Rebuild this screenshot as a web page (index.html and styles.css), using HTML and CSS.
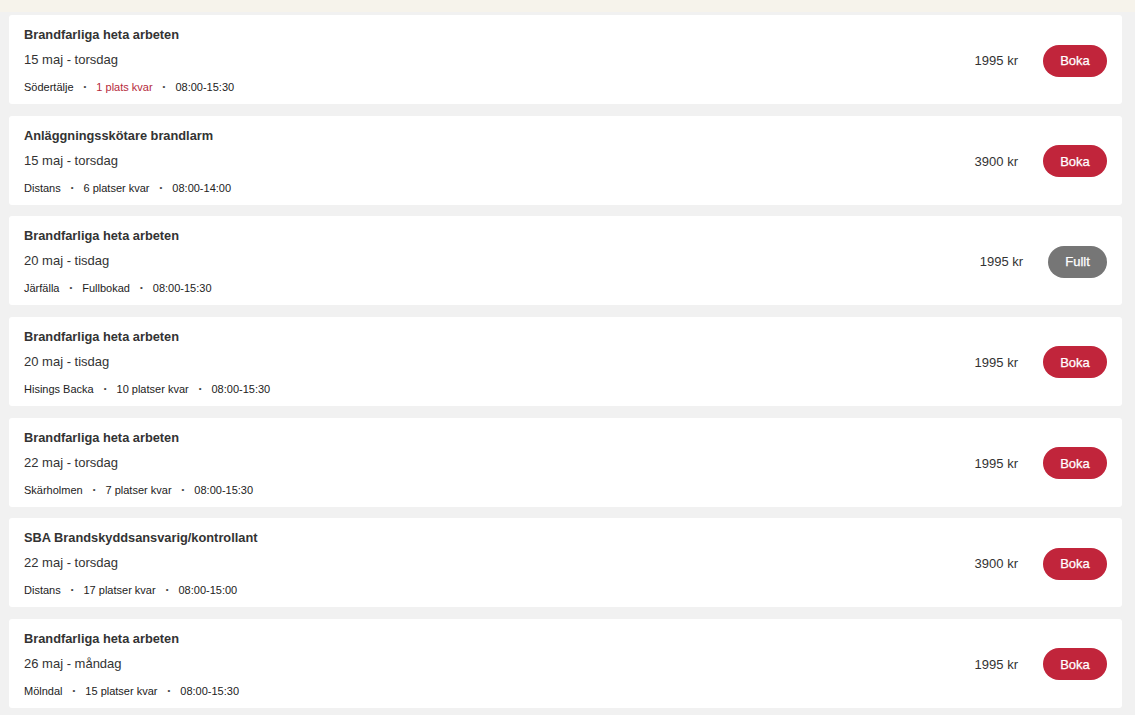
FILE: index.html
```html
<!DOCTYPE html>
<html lang="sv">
<head>
<meta charset="utf-8">
<title>Kurstillfällen</title>
<link rel="stylesheet" href="styles.css">
</head>
<body>
<div class="topstrip"></div>
<main class="list">
  <div class="card">
    <div class="info">
      <div class="title">Brandfarliga heta arbeten</div>
      <div class="date">15 maj - torsdag</div>
      <div class="meta"><span>Södertälje</span><span class="dot">•</span><span class="low">1 plats kvar</span><span class="dot">•</span><span>08:00-15:30</span></div>
    </div>
    <div class="price">1995 kr</div>
    <button class="btn">Boka</button>
  </div>
  <div class="card">
    <div class="info">
      <div class="title">Anläggningsskötare brandlarm</div>
      <div class="date">15 maj - torsdag</div>
      <div class="meta"><span>Distans</span><span class="dot">•</span><span>6 platser kvar</span><span class="dot">•</span><span>08:00-14:00</span></div>
    </div>
    <div class="price">3900 kr</div>
    <button class="btn">Boka</button>
  </div>
  <div class="card">
    <div class="info">
      <div class="title">Brandfarliga heta arbeten</div>
      <div class="date">20 maj - tisdag</div>
      <div class="meta"><span>Järfälla</span><span class="dot">•</span><span>Fullbokad</span><span class="dot">•</span><span>08:00-15:30</span></div>
    </div>
    <div class="price">1995 kr</div>
    <button class="btn full">Fullt</button>
  </div>
  <div class="card">
    <div class="info">
      <div class="title">Brandfarliga heta arbeten</div>
      <div class="date">20 maj - tisdag</div>
      <div class="meta"><span>Hisings Backa</span><span class="dot">•</span><span>10 platser kvar</span><span class="dot">•</span><span>08:00-15:30</span></div>
    </div>
    <div class="price">1995 kr</div>
    <button class="btn">Boka</button>
  </div>
  <div class="card">
    <div class="info">
      <div class="title">Brandfarliga heta arbeten</div>
      <div class="date">22 maj - torsdag</div>
      <div class="meta"><span>Skärholmen</span><span class="dot">•</span><span>7 platser kvar</span><span class="dot">•</span><span>08:00-15:30</span></div>
    </div>
    <div class="price">1995 kr</div>
    <button class="btn">Boka</button>
  </div>
  <div class="card">
    <div class="info">
      <div class="title">SBA Brandskyddsansvarig/kontrollant</div>
      <div class="date">22 maj - torsdag</div>
      <div class="meta"><span>Distans</span><span class="dot">•</span><span>17 platser kvar</span><span class="dot">•</span><span>08:00-15:00</span></div>
    </div>
    <div class="price">3900 kr</div>
    <button class="btn">Boka</button>
  </div>
  <div class="card">
    <div class="info">
      <div class="title">Brandfarliga heta arbeten</div>
      <div class="date">26 maj - måndag</div>
      <div class="meta"><span>Mölndal</span><span class="dot">•</span><span>15 platser kvar</span><span class="dot">•</span><span>08:00-15:30</span></div>
    </div>
    <div class="price">1995 kr</div>
    <button class="btn">Boka</button>
  </div>
</main>
</body>
</html>
```
FILE: styles.css
```css
html, body {
  margin: 0;
  padding: 0;
}
body {
  background: #f1f1f1;
  font-family: "Liberation Sans", Arial, sans-serif;
  color: #333333;
}
.topstrip {
  height: 12px;
  background: #f6f3eb;
}
.list {
  display: flex;
  flex-direction: column;
  gap: 11.67px;
  padding: 3px 13px 0 9px;
}
.card {
  background: #ffffff;
  border-radius: 3px;
  height: 89px;
  box-sizing: border-box;
  padding: 11px 15px 9px 15px;
  display: flex;
  align-items: center;
}
.info {
  flex: 1;
  display: flex;
  flex-direction: column;
  align-self: stretch;
}
.title {
  font-size: 12.8px;
  font-weight: bold;
  line-height: 18px;
  color: #333333;
}
.date {
  font-size: 13px;
  line-height: 18px;
  margin-top: 7px;
  color: #333333;
}
.meta {
  font-size: 11px;
  line-height: 16px;
  margin-top: 10px;
  color: #222222;
  display: flex;
}
.meta .dot {
  font-size: 8px;
  margin: 0 10px;
  color: #444;
}
.meta .low {
  color: #b52a3c;
}
.price {
  font-size: 13px;
  color: #333333;
  margin-right: 25px;
}
.btn {
  border: none;
  font-family: "Liberation Sans", Arial, sans-serif;
  font-size: 13px;
  font-weight: normal;
  -webkit-text-stroke: 0.25px #ffffff;
  color: #ffffff;
  background: #c1253b;
  height: 32px;
  padding: 0 17.2px;
  border-radius: 16px;
  cursor: pointer;
}
.btn.full {
  background: #767676;
}
```
